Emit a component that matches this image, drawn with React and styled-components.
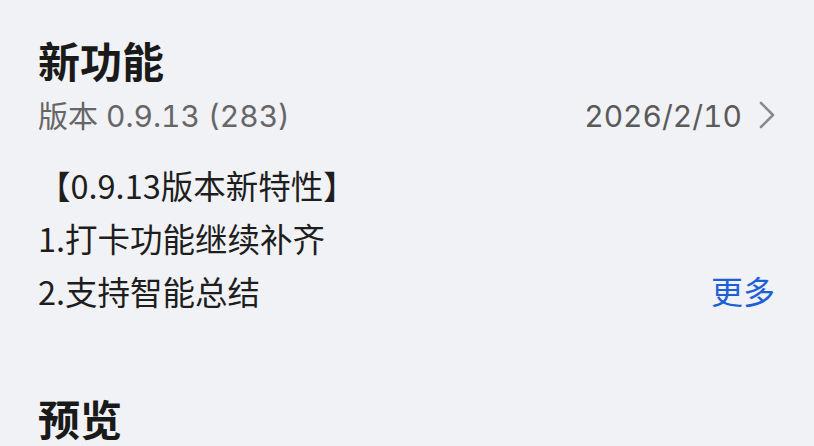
import React from "react";
import styled, { createGlobalStyle } from "styled-components";

const GlobalStyle = createGlobalStyle`
  html, body {
    margin: 0;
    padding: 0;
    background: #f1f2f5;
  }
  body {
    font-family: "Noto Sans CJK SC", "Noto Sans", sans-serif;
    overflow: hidden;
  }
`;

const notes = ["【0.9.13版本新特性】", "1.打卡功能继续补齐", "2.支持智能总结"];

const App = () => {
  return (
    <>
      <GlobalStyle />
      <Page>
        <SectionTitle>新功能</SectionTitle>
        <VersionRow>
          <VersionText>版本 0.9.13 (283)</VersionText>
          <DateLink>
            2026/2/10
            <Chevron viewBox="0 0 16 28" aria-hidden="true">
              <path d="M2 2 L14 14 L2 26" />
            </Chevron>
          </DateLink>
        </VersionRow>
        <Notes>
          {notes.map((line, i) => (
            <NoteLine key={i}>
              <span>{line}</span>
              {i === notes.length - 1 && <MoreLink>更多</MoreLink>}
            </NoteLine>
          ))}
        </Notes>
        <SectionTitle $spaced>预览</SectionTitle>
      </Page>
    </>
  );
};

export default App;

const Page = styled.div`
  width: 814px;
  height: 446px;
  box-sizing: border-box;
  padding: 35px 38px 0 38px;
  display: flex;
  flex-direction: column;
`;

const SectionTitle = styled.h1`
  margin: ${(p) => (p.$spaced ? "76px" : "0")} 0 0 0;
  font-size: 42px;
  line-height: 50px;
  font-weight: 700;
  color: #1a1a1a;
`;

const VersionRow = styled.div`
  margin-top: 11px;
  display: flex;
  align-items: center;
  justify-content: space-between;
  height: 40px;
  font-family: Inter, "Noto Sans CJK SC", sans-serif;
  font-variant-numeric: tabular-nums;
  font-size: 30px;
  line-height: 40px;
`;

const VersionText = styled.span`
  color: #666666;
`;

const DateLink = styled.span`
  display: flex;
  align-items: center;
  gap: 17px;
  color: #5a5a5a;
  margin-right: 1px;
`;

const Chevron = styled.svg`
  width: 16px;
  height: 28px;
  margin-top: -2px;
  fill: none;
  stroke: #8a8a8a;
  stroke-width: 2.6;
  stroke-linecap: round;
  stroke-linejoin: round;
`;

const Notes = styled.div`
  margin-top: 22px;
  display: flex;
  flex-direction: column;
`;

const NoteLine = styled.div`
  display: flex;
  justify-content: space-between;
  align-items: center;
  font-size: 32.5px;
  line-height: 53px;
  color: #1e1e1e;
`;

const MoreLink = styled.span`
  color: #1f5fd6;
  font-size: 32px;
  margin-right: 1px;
`;
